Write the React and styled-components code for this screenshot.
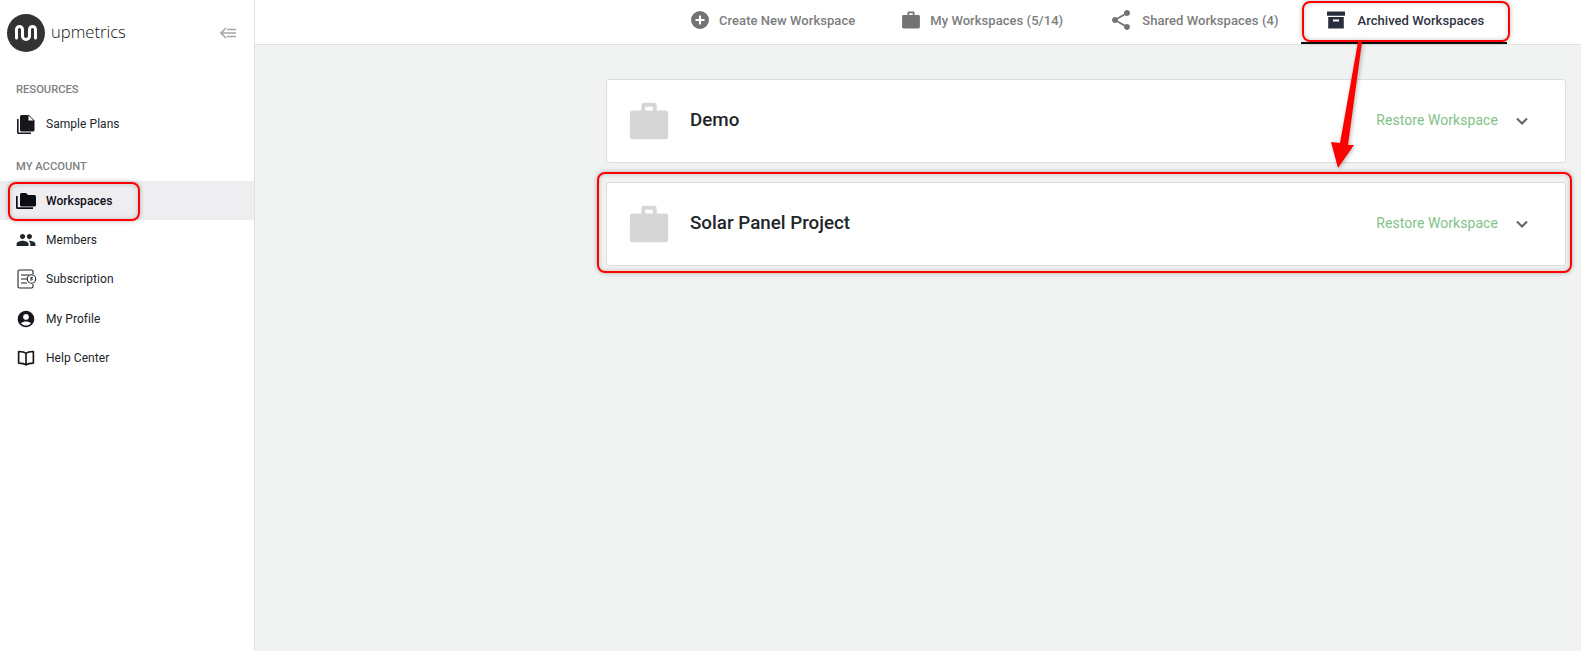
import React from 'react';
import styled, { createGlobalStyle } from 'styled-components';

const Global = createGlobalStyle`
  html, body { margin: 0; padding: 0; height: 100%; overflow: hidden; }
  body { font-family: Roboto, "Liberation Sans", sans-serif; background: #f1f3f3; }
  #root { height: 100%; }
  * { box-sizing: border-box; }
`;

const Page = styled.div`display: flex; width: 1581px; height: 651px;`;
const Sidebar = styled.aside`width: 255px; flex: none; background: #fff; border-right: 1px solid #dfe1e1;`;
const Brand = styled.div`display: flex; align-items: center; height: 64px; padding: 2px 17px 0 7px;`;
const Wordmark = styled.span`font-family: "Open Sans", sans-serif; font-size: 16.6px; font-weight: 300; color: #111; margin: -4px 0 0 6px; flex: 1;`;
const SectionLabel = styled.div`
  height: ${p => p.$h}px; padding: ${p => p.$top}px 0 0 16px; display: flex; align-items: center;
  font-size: 11.2px; font-weight: 500; color: #808080;
`;
const Row = styled.div`
  position: relative; display: flex; align-items: center; height: 39.3px; padding-left: 14px; gap: 8px;
  font-size: 12px; letter-spacing: 0.05px;
  font-weight: ${p => (p.$active ? 500 : 400)};
  background: ${p => (p.$active ? '#eeeef0' : 'transparent')};
  color: ${p => (p.$active ? '#0c0c14' : '#212529')};
`;
const Main = styled.main`position: relative; flex: 1; min-width: 0;`;
const Header = styled.header`
  display: flex; height: 45px; padding-left: 410px; background: #fff; border-bottom: 1px solid #e0e2e2;
`;
const Tab = styled.div`
  position: relative; display: flex; align-items: center; height: 44px;
  padding: 0 ${p => p.$right || 23}px ${p => (p.$active ? 2 : 4)}px 23px;
  gap: ${p => p.$gap || 7}px; font-size: 13px; font-weight: 500; letter-spacing: 0.05px;
  color: ${p => (p.$active ? '#2f3242' : '#7d7d7d')};
  border-bottom: ${p => (p.$active ? '2px solid #111' : '0')};
`;
const Content = styled.div`display: flex; flex-direction: column; gap: 19px; padding: 34px 15px 0 351px;`;
const Card = styled.section`
  position: relative; display: flex; align-items: center; height: 84px; padding: 0 31px 0 19px;
  background: #fff; border: 1px solid #dcdede; border-radius: 3px;
`;
const CardTitle = styled.h2`
  flex: 1; margin: 0 0 2px 18px; font-size: 18.8px; font-weight: 500; color: #212529;
`;
const Restore = styled.span`font-size: 14px; letter-spacing: 0.06px; color: #82c287; margin: 0 12px 2px 0;`;
const RedBox = styled.div`
  position: absolute; border: 2px solid #ff0000; border-radius: 8px; pointer-events: none;
  box-shadow: 0 0 5px rgba(0,0,0,.28), inset 0 0 5px rgba(0,0,0,.2);
`;
const RowMark = styled(RedBox)`left: 8px; top: 1px; width: 132px; height: 39px;`;
const TabMark = styled(RedBox)`left: 1px; top: 1px; width: 208px; height: 41px;`;
const CardMark = styled(RedBox)`left: -10px; right: -7px; top: -11px; bottom: -8px;`;
const Arrow = styled.svg`position: absolute; left: 1060px; top: 38px; filter: drop-shadow(1px 1px 2px rgba(0,0,0,.3));`;

const Icon = ({ size = 24, color = 'currentColor', box = '0 0 24 24', children }) => (
  <svg width={size} height={size} viewBox={box} fill={color} style={{ flex: 'none' }}>{children}</svg>
);

const Logo = () => (
  <svg width="38" height="38" viewBox="0 0 38 38" style={{ flex: 'none' }}>
    <circle cx="19" cy="19" r="19" fill="#333" />
    <path d="M9.500 24V15.500a3 3 0 0 1 6 0V22a3.500 3.500 0 0 0 7 0v-6.500a3 3 0 0 1 6 0V24" fill="none" stroke="#fff" strokeWidth="3" strokeLinecap="round" />
  </svg>
);
const Collapse = () => (
  <svg width="17" height="12" viewBox="0 0 17 12" fill="none" stroke="#a6a6a6" strokeWidth="1.600">
    <path d="M6 1 1 6l5 5M1 6h15M7 2.500h9M7 9.500h9" />
  </svg>
);
const Plans = () => (
  <Icon color="#16161c">
    <path d="M7.500 3H15l5.500 5.500V18a1.500 1.500 0 0 1-1.500 1.500H7.500A1.500 1.500 0 0 1 6 18V4.500A1.500 1.500 0 0 1 7.500 3z" />
    <path d="M14.500 3.500v5h5z" fill="#fff" />
    <path d="M3 7h1.600v13.400H17V22H4.500A1.500 1.500 0 0 1 3 20.500z" />
  </Icon>
);
const Folders = () => (
  <Icon color="#0c0c14">
    <path d="M7.500 4h4.500l2 2h6.500A1.500 1.500 0 0 1 22 7.500V16a1.500 1.500 0 0 1-1.500 1.500h-13A1.500 1.500 0 0 1 6 16V5.500A1.500 1.500 0 0 1 7.500 4z" />
    <path d="M2 7h1.700v11.200H19V20H3.500A1.500 1.500 0 0 1 2 18.500z" />
  </Icon>
);
const People = () => (
  <Icon color="#212529" box="-2 -2 28 28">
    <path d="M16 11c1.660 0 2.990-1.340 2.990-3S17.660 5 16 5c-1.660 0-3 1.340-3 3s1.340 3 3 3zm-8 0c1.660 0 2.990-1.340 2.990-3S9.660 5 8 5C6.340 5 5 6.340 5 8s1.340 3 3 3zm0 2c-2.330 0-7 1.170-7 3.500V19h14v-2.500c0-2.330-4.670-3.500-7-3.500zm8 0c-.290 0-.620.020-.970.050 1.160.840 1.970 1.970 1.970 3.450V19h6v-2.500c0-2.330-4.670-3.500-7-3.500z" />
  </Icon>
);
const Billing = () => (
  <Icon>
    <g fill="none" stroke="#212529" strokeWidth="1.100">
      <path d="M19 7V4.500A1.500 1.500 0 0 0 17.500 3h-12A1.500 1.500 0 0 0 4 4.500v15A1.500 1.500 0 0 0 5.500 21h12a1.500 1.500 0 0 0 1.500-1.500V17" />
      <path d="M7 8h8M7 12h6M7 16h6" />
      <circle cx="17.500" cy="12" r="4.200" />
    </g>
    <path d="M19 10.400h-2.200v1.300h1.400v1.300H16" fill="none" stroke="#212529" strokeWidth=".9" />
  </Icon>
);
const Profile = () => (
  <Icon color="#16161c" box="-2.500 -2.500 29 29">
    <path d="M12 2C6.480 2 2 6.480 2 12s4.480 10 10 10 10-4.480 10-10S17.520 2 12 2zm0 4c1.930 0 3.500 1.570 3.500 3.500S13.930 13 12 13s-3.500-1.570-3.500-3.500S10.070 6 12 6zm0 14c-2.030 0-4.430-.820-6.140-2.880C7.550 15.800 9.680 15 12 15s4.450.800 6.140 2.120C16.430 19.180 14.030 20 12 20z" />
  </Icon>
);
const Book = () => (
  <Icon box="-1 -1 26 26">
    <path d="M12 7C10.500 5.600 8 5 4 5v12.500c4 0 6.500.6 8 2 1.500-1.400 4-2 8-2V5c-4 0-6.500.6-8 2zm0 0v12.500" fill="none" stroke="#16161c" strokeWidth="1.800" strokeLinejoin="round" />
  </Icon>
);
const PlusCircle = () => (
  <Icon color="#737373">
    <path d="M12 3a9 9 0 1 0 0 18 9 9 0 0 0 0-18zm4.500 10h-3.500v3.500h-2V13H7.500v-2H11V7.500h2V11h3.500z" />
  </Icon>
);
const casePath = 'M9.500 2.500h5A1.500 1.500 0 0 1 16 4v2.500h4.500A1.500 1.500 0 0 1 22 8v12a1.500 1.500 0 0 1-1.500 1.500h-17A1.500 1.500 0 0 1 2 20V8a1.500 1.500 0 0 1 1.500-1.500H8V4a1.500 1.500 0 0 1 1.500-1.500zM10 4.500v2h4v-2z';
const Case = ({ color, size, box }) => (
  <Icon color={color} size={size} box={box}>
    <path fillRule="evenodd" d={casePath} />
  </Icon>
);
const Share = () => (
  <Icon color="#737373">
    <path d="M18 16.080c-.760 0-1.440.300-1.960.770L8.910 12.700c.050-.230.090-.460.090-.700s-.040-.470-.090-.700l7.050-4.110c.540.500 1.250.810 2.040.810 1.660 0 3-1.340 3-3s-1.340-3-3-3-3 1.340-3 3c0 .240.040.470.090.700L8.040 9.810C7.500 9.310 6.790 9 6 9c-1.660 0-3 1.340-3 3s1.340 3 3 3c.790 0 1.500-.310 2.040-.810l7.120 4.160c-.050.210-.080.430-.080.650 0 1.610 1.310 2.920 2.920 2.920s2.920-1.310 2.920-2.920-1.310-2.920-2.920-2.920z" />
  </Icon>
);
const Archive = () => (
  <Icon color="#2a2d3e">
    <path fillRule="evenodd" d="M3 3.500h18v4.200H3zM4.200 9h15.600v11.500H4.200zM9 11.500v2h6v-2z" />
  </Icon>
);
const Chevron = () => (
  <svg width="24" height="24" viewBox="0 0 24 24" fill="none" stroke="#5f6368" strokeWidth="2" style={{ flex: 'none' }}>
    <path d="M7 9.500l5 5 5-5" />
  </svg>
);

const nav = [
  { label: 'Workspaces', icon: <Folders />, active: true },
  { label: 'Members', icon: <People /> },
  { label: 'Subscription', icon: <Billing /> },
  { label: 'My Profile', icon: <Profile /> },
  { label: 'Help Center', icon: <Book /> },
];

const WorkspaceCard = ({ title, marked }) => (
  <Card>
    <Case color="#d6d6d6" size={46} />
    <CardTitle>{title}</CardTitle>
    <Restore>Restore Workspace</Restore>
    <Chevron />
    {marked && <CardMark />}
  </Card>
);

export default function App() {
  return (
    <Page>
      <Global />
      <Sidebar>
        <Brand>
          <Logo />
          <Wordmark>upmetrics</Wordmark>
          <Collapse />
        </Brand>
        <SectionLabel $h={40} $top={11}>RESOURCES</SectionLabel>
        <Row><Plans />Sample Plans</Row>
        <SectionLabel $h={37.7} $top={8}>MY ACCOUNT</SectionLabel>
        {nav.map(n => (
          <Row key={n.label} $active={n.active}>
            {n.icon}{n.label}
            {n.active && <RowMark />}
          </Row>
        ))}
      </Sidebar>
      <Main>
        <Header>
          <Tab $right={21}><PlusCircle />Create New Workspace</Tab>
          <Tab><Case color="#737373" box="-1.500 -1.500 27 27" />My Workspaces (5/14)</Tab>
          <Tab $gap={9}><Share />Shared Workspaces (4)</Tab>
          <Tab $active $gap={9}><Archive />Archived Workspaces<TabMark /></Tab>
        </Header>
        <Content>
          <WorkspaceCard title="Demo" />
          <WorkspaceCard title="Solar Panel Project" marked />
        </Content>
        <Arrow width="50" height="135" viewBox="0 0 50 135">
          <path d="M43 4 L47 4 L33 107 L39 107 L23 130 L16 104 L25 105 Z" fill="#ff0000" />
        </Arrow>
      </Main>
    </Page>
  );
}
